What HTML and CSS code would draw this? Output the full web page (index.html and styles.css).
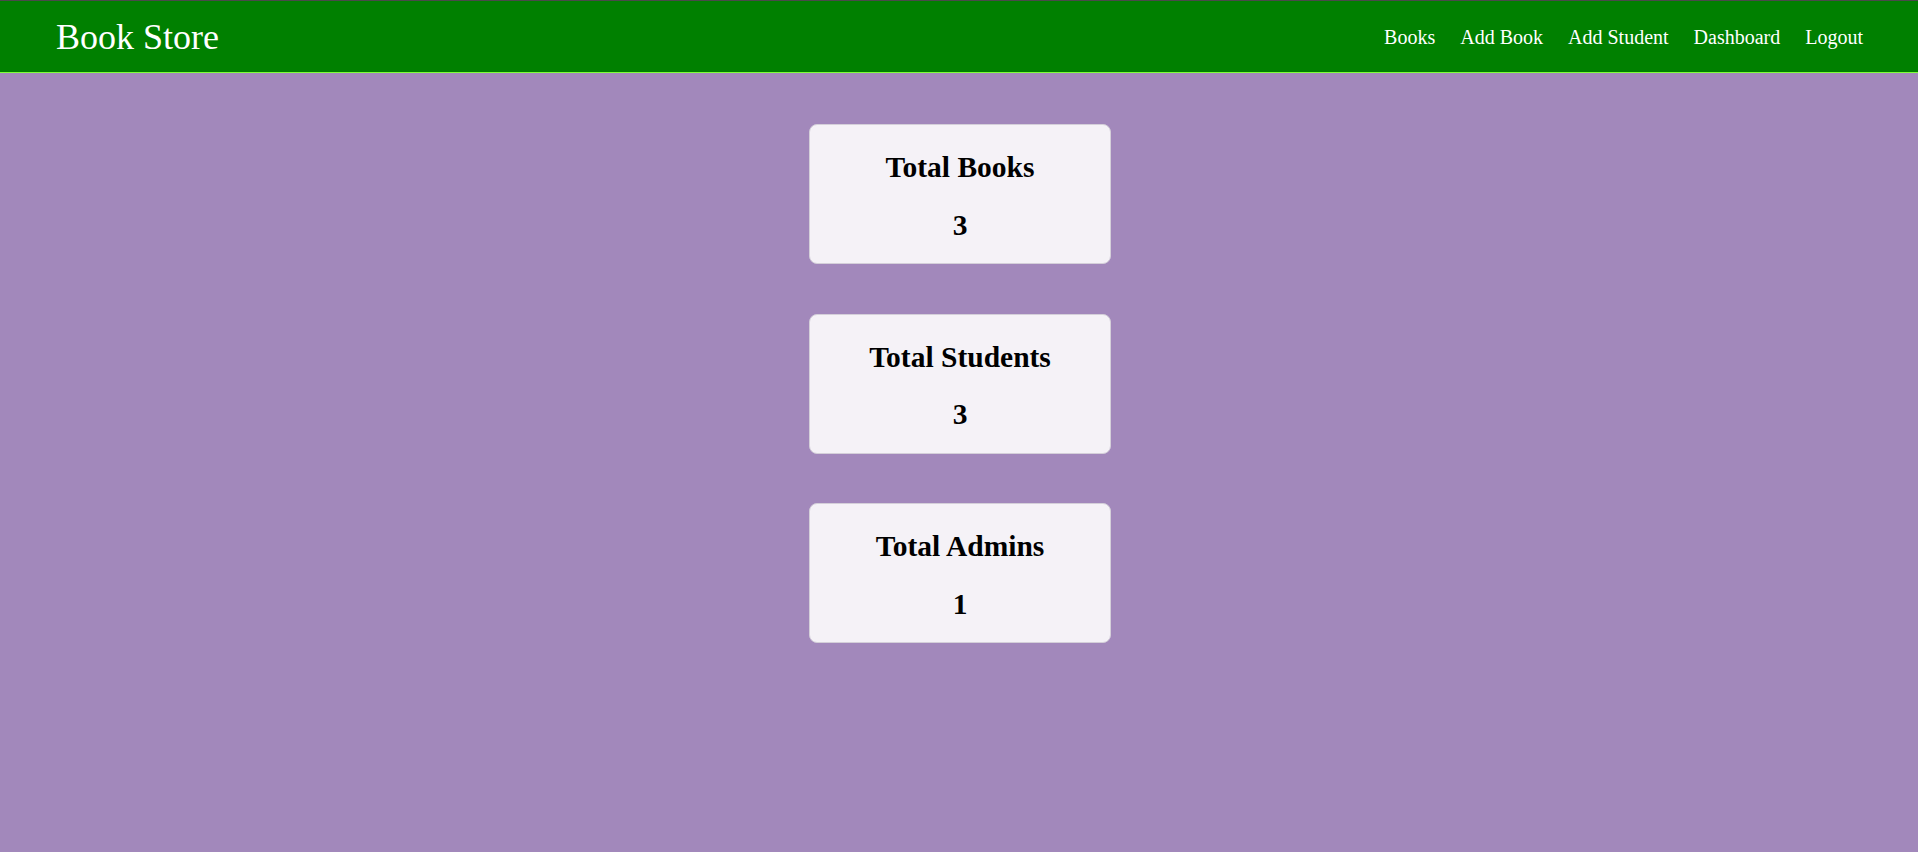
FILE: index.html
```html
<!DOCTYPE html>
<html lang="en">
<head>
<meta charset="utf-8">
<title>Book Store</title>
<link rel="stylesheet" href="styles.css">
</head>
<body>
<header class="navbar">
  <a class="brand" href="#">Book Store</a>
  <nav class="nav-links">
    <a href="#">Books</a>
    <a href="#">Add Book</a>
    <a href="#">Add Student</a>
    <a href="#">Dashboard</a>
    <a href="#">Logout</a>
  </nav>
</header>
<main class="dashboard">
  <div class="card">
    <h2 class="card-title">Total Books</h2>
    <h2 class="card-value">3</h2>
  </div>
  <div class="card">
    <h2 class="card-title">Total Students</h2>
    <h2 class="card-value">3</h2>
  </div>
  <div class="card">
    <h2 class="card-title">Total Admins</h2>
    <h2 class="card-value">1</h2>
  </div>
</main>
</body>
</html>
```
FILE: styles.css
```css
html, body {
  margin: 0;
  padding: 0;
}
body {
  background: #a288bb;
  min-height: 852px;
  font-family: "Liberation Serif", "Times New Roman", serif;
}
.navbar {
  box-sizing: border-box;
  height: 73px;
  background: #008000;
  border-top: 1px solid #4a4a4a;
  border-bottom: 1px solid #80ff3a;
  display: flex;
  align-items: center;
  justify-content: space-between;
  padding: 0 55px 0 56px;
}
.brand {
  color: #ffffff;
  text-decoration: none;
  font-size: 36px;
}
.nav-links {
  display: flex;
  gap: 25px;
  padding-top: 1px;
}
.nav-links a {
  color: #ffffff;
  text-decoration: none;
  font-size: 20px;
}
.dashboard {
  display: flex;
  flex-direction: column;
  align-items: center;
  gap: 49.5px;
  padding: 51px 0 0 2px;
}
.card {
  box-sizing: border-box;
  width: 302px;
  height: 140px;
  background: #f5f2f7;
  border: 1px solid #d4cfd9;
  border-radius: 8px;
  padding: 26px 0 0;
  display: flex;
  flex-direction: column;
  align-items: center;
  gap: 24.6px;
}
.card h2 {
  margin: 0;
  font-size: 29.5px;
  font-weight: bold;
  color: #000000;
}
```
